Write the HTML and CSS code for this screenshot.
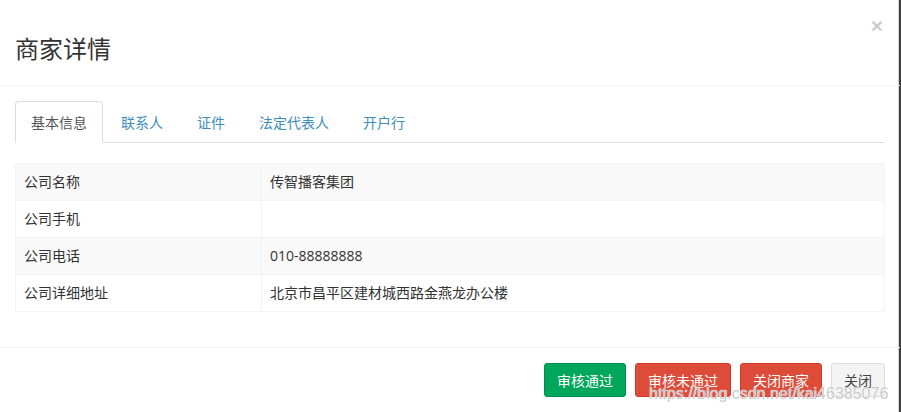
FILE: index.html
```html
<!DOCTYPE html>
<html lang="zh-CN">
<head>
<meta charset="utf-8">
<title>商家详情</title>
<link rel="stylesheet" href="styles.css">
</head>
<body>
<div class="modal">
  <div class="modal-header">
    <h3 class="modal-title">商家详情</h3>
    <button class="close" type="button">×</button>
  </div>
  <div class="modal-body">
    <ul class="nav-tabs">
      <li class="active"><a>基本信息</a></li>
      <li><a>联系人</a></li>
      <li><a>证件</a></li>
      <li><a>法定代表人</a></li>
      <li><a>开户行</a></li>
    </ul>
    <table class="info">
      <tr><td class="label">公司名称</td><td>传智播客集团</td></tr>
      <tr><td class="label">公司手机</td><td></td></tr>
      <tr><td class="label">公司电话</td><td>010-88888888</td></tr>
      <tr><td class="label">公司详细地址</td><td>北京市昌平区建材城西路金燕龙办公楼</td></tr>
    </table>
  </div>
  <div class="modal-footer">
    <button class="btn btn-success">审核通过</button>
    <button class="btn btn-danger">审核未通过</button>
    <button class="btn btn-danger">关闭商家</button>
    <button class="btn btn-default">关闭</button>
  </div>
  <div class="watermark">https://blog.csdn.net/kai46385076</div>
</div>
</body>
</html>
```
FILE: styles.css
```css
html, body {
  margin: 0;
  padding: 0;
}
body {
  background: #3d3d3d;
  display: flex;
  font-family: "Open Sans", "Noto Sans CJK SC", sans-serif;
  font-size: 14px;
  line-height: 20px;
  color: #333;
}
.modal {
  position: relative;
  width: 900px;
  height: 412px;
  background: #fff;
  box-shadow: inset -1px 0 0 #3d3d3d, inset -2px 0 0 #d4d4d4;
}
.modal-header {
  display: flex;
  padding: 15px 17px 15px 15px;
  border-bottom: 1px solid #f4f4f4;
}
.modal-title {
  margin: 16px 0 5px;
  font-family: "Noto Sans CJK SC", sans-serif;
  font-weight: normal;
  font-size: 24px;
  line-height: 34px;
  color: #333;
}
.close {
  margin-left: auto;
  align-self: flex-start;
  padding: 0;
  border: 0;
  background: none;
  font-family: "Liberation Sans", sans-serif;
  font-size: 21px;
  font-weight: bold;
  line-height: 1;
  color: #000;
  opacity: .2;
  margin-top: 0;
}
.modal-body {
  padding: 15px;
}
.nav-tabs {
  display: flex;
  list-style: none;
  margin: 0;
  padding: 0;
  border-bottom: 1px solid #ddd;
}
.nav-tabs li {
  margin-bottom: -1px;
  margin-right: 2px;
}
.nav-tabs a {
  display: block;
  padding: 10px 15px;
  line-height: 20px;
  border: 1px solid transparent;
  border-radius: 4px 4px 0 0;
  color: #3c8dbc;
  font-family: "Noto Sans CJK SC", sans-serif;
}
.nav-tabs li.active a {
  color: #555;
  background: #fff;
  border-color: #ddd;
  border-bottom-color: transparent;
}
.info {
  width: 100%;
  margin-top: 20px;
  margin-bottom: 20px;
  border-collapse: collapse;
  border: 1px solid #f4f4f4;
}
.info td {
  padding: 8px;
  line-height: 20px;
  height: 20px;
  border: 1px solid #f4f4f4;
  vertical-align: top;
}
.info td.label {
  width: 229px;
}
.info tr:nth-child(odd) {
  background: #f9f9f9;
}
.modal-footer {
  display: flex;
  justify-content: flex-end;
  gap: 9px;
  padding: 15px;
  border-top: 1px solid #f4f4f4;
}
.btn {
  padding: 6px 12px;
  font-family: "Noto Sans CJK SC", sans-serif;
  font-size: 14px;
  line-height: 20px;
  border: 1px solid transparent;
  border-radius: 3px;
  color: #fff;
}
.btn-success {
  background: #00a65a;
  border-color: #008d4c;
}
.btn-danger {
  background: #dd4b39;
  border-color: #d73925;
}
.btn-default {
  background: #f4f4f4;
  border-color: #ddd;
  color: #444;
}
.watermark {
  position: absolute;
  left: 649px;
  top: 385px;
  font-family: "Liberation Sans", sans-serif;
  font-size: 16px;
  line-height: 18px;
  color: rgba(190, 190, 190, .85);
  text-shadow: 0 0 1px #fff, 0 0 1px #fff;
  white-space: nowrap;
}
```
